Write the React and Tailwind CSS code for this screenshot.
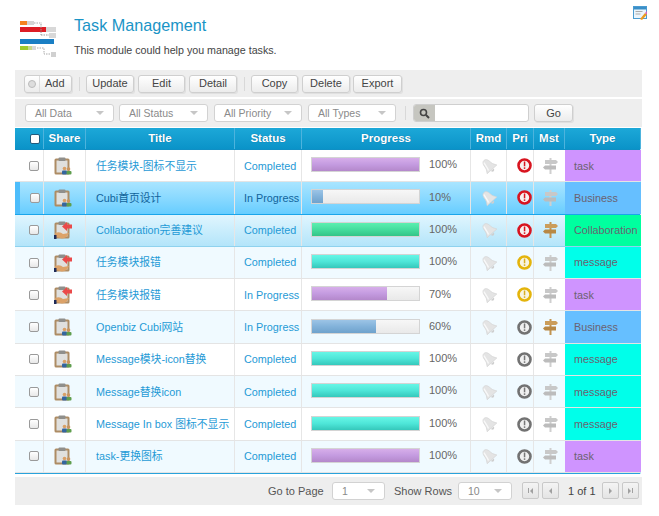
import React from 'react';

const rows = [
  { title: '任务模块-图标不显示', status: 'Completed', pct: 100, bar: 'purple', share: 'a', pri: 'red', mst: false, type: 'task', bg: 'bg-white' },
  { title: 'Cubi首页设计', status: 'In Progress', pct: 10, bar: 'blue', share: 'a', pri: 'red', mst: false, type: 'Business', bg: 'selected' },
  { title: 'Collaboration完善建议', status: 'Completed', pct: 100, bar: 'green', share: 'b', pri: 'red', mst: true, type: 'Collaboration', bg: 'hover' },
  { title: '任务模块报错', status: 'Completed', pct: 100, bar: 'teal', share: 'b', pri: 'yellow', mst: false, type: 'message', bg: 'bg-[#f0faff]' },
  { title: '任务模块报错', status: 'In Progress', pct: 70, bar: 'purple', share: 'b', pri: 'yellow', mst: false, type: 'task', bg: 'bg-white' },
  { title: 'Openbiz Cubi网站', status: 'In Progress', pct: 60, bar: 'blue', share: 'a', pri: 'gray', mst: true, type: 'Business', bg: 'bg-[#f0faff]' },
  { title: 'Message模块-icon替换', status: 'Completed', pct: 100, bar: 'teal', share: 'a', pri: 'gray', mst: false, type: 'message', bg: 'bg-white' },
  { title: 'Message替换icon', status: 'Completed', pct: 100, bar: 'teal', share: 'a', pri: 'gray', mst: false, type: 'message', bg: 'bg-[#f0faff]' },
  { title: 'Message In box 图标不显示', status: 'Completed', pct: 100, bar: 'teal', share: 'a', pri: 'gray', mst: false, type: 'message', bg: 'bg-white' },
  { title: 'task-更换图标', status: 'Completed', pct: 100, bar: 'purple', share: 'a', pri: 'gray', mst: false, type: 'task', bg: 'bg-[#f0faff]' },
];

const typeColors = {
  task: 'bg-[#cf94ff]',
  Business: 'bg-[#66bfff]',
  Collaboration: 'bg-[#00ff9f]',
  message: 'bg-[#00ffea]',
};

const barColors = {
  purple: 'bg-gradient-to-b from-[#d7aeea] via-[#c49be0] to-[#b488cb]',
  blue: 'bg-gradient-to-b from-[#9cc4e6] via-[#82b2da] to-[#6fa2cc]',
  green: 'bg-gradient-to-b from-[#5cefb0] via-[#45dd9e] to-[#33c488]',
  teal: 'bg-gradient-to-b from-[#66f6e6] via-[#4ee6d8] to-[#35c8bb]',
};

const grid = 'grid grid-cols-[29px_42px_149px_67px_169px_36px_27px_31px_76px]';
const cellLine = 'border-r border-[#e6e6e6]';

const Logo = () => (
  <svg width="38" height="40" viewBox="0 0 38 40">
    <rect x="1" y="1" width="7" height="4" fill="#f5821f" />
    <rect x="8" y="1" width="7" height="4" fill="#d4d4d4" />
    <path d="M15 3 H23" stroke="#aaa" strokeDasharray="1.5 1" />
    <rect x="1" y="7" width="26" height="5" fill="#dd1c24" />
    <rect x="27" y="7" width="10" height="5" fill="#d8d8d8" />
    <path d="M22 4 V15 M22 15 H30" stroke="#999" strokeDasharray="1.5 1" />
    <rect x="30" y="13" width="7" height="5" fill="#d8d8d8" />
    <rect x="1" y="19" width="34" height="5" fill="#1a7fc4" />
    <rect x="1" y="26" width="8" height="4" fill="#9fcb2d" />
    <rect x="9" y="26" width="4" height="4" fill="#c6d98c" />
    <rect x="13" y="26" width="4" height="4" fill="#d8d8d8" />
    <path d="M18 28 H25 V34 H32" stroke="#aaa" strokeDasharray="1.5 1" fill="none" />
    <rect x="32" y="32" width="5" height="5" fill="#d0d0d0" />
  </svg>
);

const CornerIcon = () => (
  <svg width="14" height="14" viewBox="0 0 14 14">
    <rect x="0.5" y="0.5" width="13" height="12" fill="#eaf4fb" stroke="#4a9bd0" />
    <rect x="1" y="1" width="12" height="2.5" fill="#3a8fc8" />
    <rect x="2.5" y="5" width="7" height="1" fill="#aaa" />
    <rect x="2.5" y="7.5" width="5" height="1" fill="#aaa" />
    <path d="M7 13 L12 7 L14 8.5 L9 14 Z" fill="#eb9a1f" />
    <path d="M12 7 L14 5 L14 8.5 Z" fill="#d85fc0" />
  </svg>
);

const ShareIcon = ({ kind }) => (
  <svg width="18" height="18" viewBox="0 0 18 18">
    <rect x="0.5" y="1.5" width="15" height="16" rx="1.5" fill="#ad8c64" />
    <path d="M2.5 3.5 H13.5 V15.5 H2.5 Z" fill="#e0e0de" />
    <rect x="4.5" y="0.5" width="7" height="3.5" rx="1" fill="#8f8f8c" />
    {kind === 'a' ? (
      <>
        <circle cx="10.5" cy="11.5" r="1.8" fill="#d9a066" />
        <rect x="8" y="13.5" width="5" height="4" rx="1" fill="#34659e" />
        <circle cx="14.5" cy="12" r="1.8" fill="#c99560" />
        <rect x="12.5" y="14" width="5" height="3.5" rx="1" fill="#5f9e4e" />
      </>
    ) : (
      <>
        <path d="M18 3.5 L13 3.5 L13 1 L8 5.5 L13 10 L13 7.5 L18 7.5 Z" fill="#ea4a4a" />
        <path d="M1 12 Q6 10 9 13 L15 12 Q13 17 8 17.5 L2 16 Z" fill="#dca268" />
        <rect x="0" y="14" width="2.5" height="4" fill="#1e2b58" />
      </>
    )}
  </svg>
);

const BellIcon = () => (
  <svg width="16" height="16" viewBox="0 0 16 16">
    <g transform="rotate(-42 8 8)">
      <path d="M8 0.5 C5.2 0.5 4.4 3.5 4.2 6.5 C4 9.5 2 11 1.5 12.5 L14.5 12.5 C14 11 12 9.5 11.8 6.5 C11.6 3.5 10.8 0.5 8 0.5 Z" fill="#e4e4e4" stroke="#d2d2d2" strokeWidth="0.6" />
      <path d="M6.6 2 C5.8 4 5.8 8 4.6 11" stroke="#f8f8f8" strokeWidth="1.4" fill="none" />
      <path d="M6 13 H10 Q9.5 15 8 15 Q6.5 15 6 13 Z" fill="#cfcfcf" />
    </g>
  </svg>
);

const priColors = {
  red: { ring: '#d8141f', mark: '#d8141f', fill: '#f7f0f0' },
  yellow: { ring: '#e4b40c', mark: '#d9ae22', fill: '#f8f5e2' },
  gray: { ring: '#727272', mark: '#777', fill: '#f0f0f0' },
};

const PriIcon = ({ level }) => {
  const c = priColors[level];
  return (
    <svg width="15" height="15" viewBox="0 0 15 15">
      <circle cx="7.5" cy="7.5" r="6" fill={c.fill} stroke={c.ring} strokeWidth="2.6" />
      <rect x="6.8" y="3.5" width="1.5" height="4.8" fill={c.mark} />
      <rect x="6.8" y="9.3" width="1.5" height="1.6" fill={c.mark} />
    </svg>
  );
};

const SignIcon = ({ on }) => {
  const a = on ? '#cb9d5a' : '#c8c8c8';
  const b = on ? '#b88844' : '#bcbcbc';
  return (
    <svg width="15" height="16" viewBox="0 0 15 16">
      <rect x="6.5" y="0" width="2" height="16" fill={on ? '#c29450' : '#cfcfcf'} />
      <path d="M2 2 L13 2 L15 4 L13 6 L2 6 Z" fill={a} />
      <path d="M13 7.5 L2 7.5 L0 9.5 L2 11.5 L13 11.5 Z" fill={b} />
    </svg>
  );
};

const Button = ({ children, className = '' }) => (
  <button className={`h-[18px] rounded-[3px] border border-[#cfcfcf] bg-gradient-to-b from-white to-[#ececec] text-[11px] text-[#444] flex items-center justify-center shadow-[1px_1px_0_#e0e0e0] ${className}`}>
    {children}
  </button>
);

const Select = ({ label, className = '' }) => (
  <div className={`h-[18px] rounded-[3px] border border-[#d2d2d2] bg-white flex items-center justify-between pl-[9px] pr-[9px] text-[10.5px] text-[#8a8a8a] ${className}`}>
    <span className="pt-px">{label}</span>
    <span className="w-0 h-0 border-l-[4px] border-r-[4px] border-t-[4px] border-l-transparent border-r-transparent border-t-[#c6c6c6]" />
  </div>
);

const Checkbox = ({ header }) => (
  <span className={`block w-[10px] h-[10px] rounded-[2px] border ${header ? 'border-[#235a7c] bg-white' : 'border-[#9a9a9a] bg-gradient-to-b from-white to-[#e8e8e8]'}`} />
);

const PagerButton = ({ children, className = '' }) => (
  <span className={`w-[17px] h-[17px] border border-[#c9c9c9] rounded-[2px] bg-gradient-to-b from-[#f4f4f4] to-[#e4e4e4] flex items-center justify-center text-[#a0a0a0] ${className}`}>
    {children}
  </span>
);

const Arrow = ({ dir, bar }) => (
  <span className={`flex items-center gap-[1px] ${dir === 'left' ? '' : 'flex-row-reverse'}`}>
    {bar && <span className="w-[1px] h-[5px] bg-[#a0a0a0]" />}
    <span className={`w-0 h-0 border-t-[3px] border-b-[3px] border-t-transparent border-b-transparent ${dir === 'left' ? 'border-r-[3px] border-r-[#a0a0a0]' : 'border-l-[3px] border-l-[#a0a0a0]'}`} />
  </span>
);

const HeaderCell = ({ children }) => (
  <div className="flex items-center justify-center pt-px border-r border-[#4db3dd] text-white font-bold text-[11.5px] [text-shadow:0_0_1px_#0a6a99]">
    {children}
  </div>
);

const Row = ({ row }) => {
  const selected = row.bg === 'selected';
  const hover = row.bg === 'hover';
  let rowBg = `${row.bg} border-b border-[#e4e4e4]`;
  if (selected) rowBg = 'bg-gradient-to-b from-[#a9e5ff] to-[#66cdff] border-b border-[#1aa5ea]';
  if (hover) rowBg = 'bg-gradient-to-b from-[#e0f5fe] to-[#b3e5fa] border-b border-[#8fd2ee]';
  const textColor = selected ? 'text-[#11649c]' : 'text-[#1f9ad6]';
  const barWidth = `${row.pct}%`;

  return (
    <div className={`${grid} h-[32.3px] ${rowBg}`}>
      <div className={`flex items-center ${cellLine} ${selected ? 'border-l-[5px] border-l-[#4dbdfb] pl-[10px]' : 'pl-[14px]'}`}>
        <Checkbox />
      </div>
      <div className={`flex items-center justify-center pr-[4px] ${cellLine}`}>
        <ShareIcon kind={row.share} />
      </div>
      <div className={`flex items-center pl-[10px] text-[10.8px] whitespace-nowrap ${cellLine} ${textColor}`}>{row.title}</div>
      <div className={`flex items-center pl-[9px] text-[10.8px] whitespace-nowrap ${cellLine} ${textColor}`}>{row.status}</div>
      <div className={`flex items-center pl-[9px] pb-[2px] ${cellLine}`}>
        <div className="w-[109px] h-[15px] border border-[#d4d4d4] bg-gradient-to-b from-[#f7f7f7] to-[#e9e9e9]">
          <div className={`h-full ${barColors[row.bar]}`} style={{ width: barWidth }} />
        </div>
        <span className="ml-[9px] text-[11px] text-[#666]">{row.pct}%</span>
      </div>
      <div className={`flex items-center justify-center ${cellLine}`}>
        <BellIcon />
      </div>
      <div className={`flex items-center justify-end pr-[1px] ${cellLine}`}>
        <PriIcon level={row.pri} />
      </div>
      <div className="flex items-center justify-center pl-[2px]">
        <SignIcon on={row.mst} />
      </div>
      <div className={`flex items-center pl-[9px] text-[10.8px] text-[#6b6270] whitespace-nowrap ${typeColors[row.type]}`}>{row.type}</div>
    </div>
  );
};

const App = () => {
  return (
    <div className="w-[659px] h-[516px] bg-white overflow-hidden font-['Liberation_Sans','Noto_Sans_CJK_SC',sans-serif]">
      {/* page title */}
      <div className="h-[70px] flex pl-[19px] pr-[12px] pt-[20px]">
        <Logo />
        <div className="ml-[17px] flex-1">
          <h1 className="text-[16.2px] leading-[20px] mt-[-5px] text-[#1a94c6]">Task Management</h1>
          <p className="text-[10.7px] leading-[14px] mt-[8px] text-[#444]">This module could help you manage tasks.</p>
        </div>
        <div className="mt-[-14px]">
          <CornerIcon />
        </div>
      </div>

      <div className="ml-[15px] w-[627px]">
        {/* actions */}
        <div className="h-[27px] bg-[#eeeeee] flex items-center pl-[9px]">
          <Button className="w-[48px] justify-start">
            <span className="w-[15px] h-full border-r border-[#ddd] flex items-center justify-center mr-[5px]">
              <span className="w-[8px] h-[8px] rounded-full border border-[#bbb] bg-[#ddd]" />
            </span>
            Add
          </Button>
          <span className="w-px h-[14px] bg-[#d8d8d8] ml-[7px] mr-[6px]" />
          <Button className="w-[48px]">Update</Button>
          <Button className="w-[47px] ml-[4px]">Edit</Button>
          <Button className="w-[48px] ml-[4px]">Detail</Button>
          <span className="w-px h-[14px] bg-[#d8d8d8] ml-[7px] mr-[6px]" />
          <Button className="w-[47px]">Copy</Button>
          <Button className="w-[48px] ml-[4px]">Delete</Button>
          <Button className="w-[49px] ml-[3px]">Export</Button>
        </div>

        {/* filters */}
        <div className="h-[28px] mt-[2px] bg-[#eeeeee] flex items-center pl-[10px]">
          <Select label="All Data" className="w-[89px]" />
          <Select label="All Status" className="w-[89px] ml-[5px]" />
          <Select label="All Priority" className="w-[88px] ml-[6px]" />
          <Select label="All Types" className="w-[88px] ml-[6px]" />
          <span className="w-px h-[14px] bg-[#d8d8d8] ml-[9px] mr-[7px]" />
          <div className="w-[116px] h-[18px] rounded-[3px] border border-[#cfcfcf] bg-white flex overflow-hidden">
            <span className="w-[21px] bg-[#c6c6c0] flex items-center justify-center">
              <svg width="11" height="11" viewBox="0 0 11 11">
                <circle cx="4.5" cy="4.5" r="3" fill="none" stroke="#444" strokeWidth="1.6" />
                <path d="M7 7 L10 10" stroke="#444" strokeWidth="2" />
              </svg>
            </span>
          </div>
          <Button className="w-[39px] ml-[5px]">Go</Button>
        </div>

        {/* table */}
        <div className="mt-px w-[626px] border-r border-[#bfe6f5]">
          <div className={`${grid} h-[22px] border-b border-[#0f8fc4] bg-gradient-to-b from-[#1ca8d8] to-[#0a93c8]`}>
            <div className="flex items-center pl-[15px] border-r border-[#4db3dd]">
              <Checkbox header />
            </div>
            <HeaderCell>Share</HeaderCell>
            <HeaderCell>Title</HeaderCell>
            <HeaderCell>Status</HeaderCell>
            <HeaderCell>Progress</HeaderCell>
            <HeaderCell>Rmd</HeaderCell>
            <HeaderCell>Pri</HeaderCell>
            <HeaderCell>Mst</HeaderCell>
            <HeaderCell>Type</HeaderCell>
          </div>
          {rows.map((row, i) => (
            <Row key={i} row={row} />
          ))}
          <div className="h-px bg-[#29a3dc]" />
        </div>

        {/* pager */}
        <div className="h-[28px] mt-[3px] bg-[#eeeeee] flex items-center pl-[253px] text-[11px] text-[#555]">
          <span className="w-[64px]">Go to Page</span>
          <Select label="1" className="w-[53px]" />
          <span className="ml-[9px] w-[64px]">Show Rows</span>
          <Select label="10" className="w-[54px]" />
          <PagerButton className="ml-[10px]"><Arrow dir="left" bar /></PagerButton>
          <PagerButton className="ml-[3px]"><Arrow dir="left" /></PagerButton>
          <span className="ml-[9px] w-[34px] text-[#444]">1 of 1</span>
          <PagerButton><Arrow dir="right" /></PagerButton>
          <PagerButton className="ml-[3px]"><Arrow dir="right" bar /></PagerButton>
        </div>
      </div>
    </div>
  );
};

export default App;
